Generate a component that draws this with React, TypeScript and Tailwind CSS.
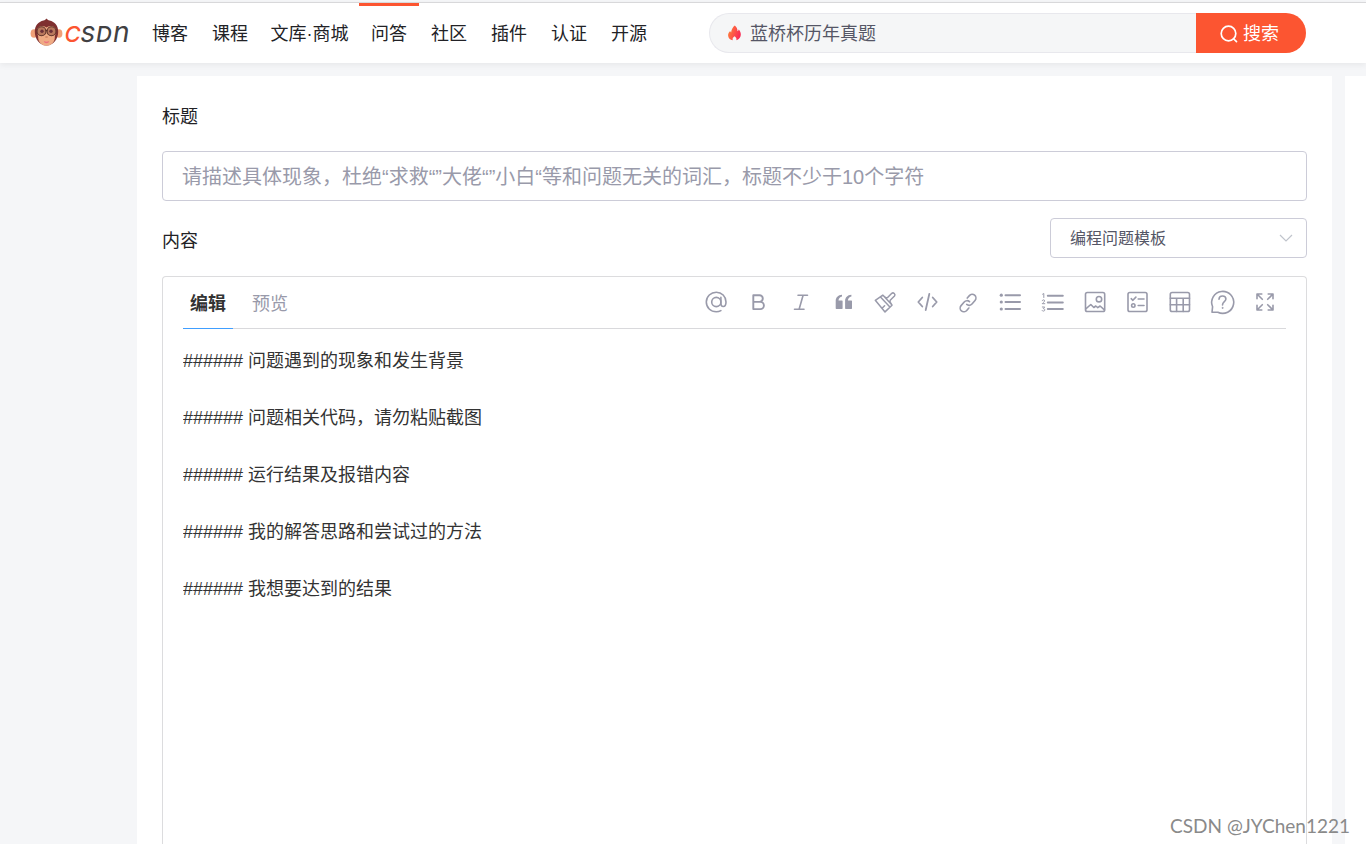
import type { ReactNode } from "react";

const NAV_BEFORE = ["博客", "课程"];
const NAV_AFTER = ["社区", "插件", "认证", "开源"];

const TEMPLATE = [
  "###### 问题遇到的现象和发生背景",
  "###### 问题相关代码，请勿粘贴截图",
  "###### 运行结果及报错内容",
  "###### 我的解答思路和尝试过的方法",
  "###### 我想要达到的结果",
].join("\n");

const TOOLS: { label: string; icon: ReactNode }[] = [
  {
    label: "提及",
    icon: (
      <>
        <circle cx="12.300" cy="12" r="4.600" />
        <path d="M16.900 7.400v6.100c0 1.900 1 3 2.300 3 1.700 0 2.800-1.700 2.800-4.500C22 6.500 17.700 2.200 12.300 2.200S2.300 6.500 2.300 12s4.400 9.800 10 9.800c1.800 0 3.200-.4 4.600-1.200" />
      </>
    ),
  },
  {
    label: "加粗",
    icon: <path strokeWidth="1.9" d="M7.300 5.300h6.200a3.300 3.300 0 0 1 0 6.600H7.300zM7.300 11.900h7a3.600 3.600 0 0 1 0 7.200h-7z" />,
  },
  {
    label: "斜体",
    icon: <path d="M10 5.200h9.500M6.500 19.200H16M15.100 5.200l-4 14" />,
  },
  {
    label: "引用",
    icon: (
      <path
        stroke="none"
        fill="currentColor"
        d="M11 4.800v1.700c-2.200.5-3.300 1.900-3.500 4H11c.4 0 .6.200.6.600v7.200c0 .4-.2.600-.6.600H5.300c-.4 0-.6-.2-.6-.6v-7c0-3.900 2.300-6.200 6.300-6.500zM20.400 4.800v1.700c-2.200.5-3.300 1.900-3.500 4h3.500c.4 0 .6.200.6.600v7.200c0 .4-.2.600-.6.600h-5.700c-.4 0-.6-.2-.6-.6v-7c0-3.900 2.300-6.200 6.300-6.500z"
      />
    ),
  },
  {
    label: "清除格式",
    icon: (
      <path
        strokeWidth="1.500"
        d="M9.800 5.200l3.200 2.700 1.600-.3 4.200-4.300c1.600-1.300 4.100 1 2.700 2.700l-4.300 4.300-.2 1.600 2 3.300-7 6.700L2.300 10.300zM10 5.300l9 9.700M7.700 7.200l9.200 9.800M9.300 18l2.300-2.300"
      />
    ),
  },
  {
    label: "代码",
    icon: <path strokeWidth="1.800" d="M7.300 7.500L3.300 12l4 4.500M17.700 7.500l4 4.500-4 4.500M14.300 4l-3.600 16" />,
  },
  {
    label: "链接",
    icon: (
      <g transform="translate(-.7 1) rotate(-4 12 12)">
        <path d="M10.300 13.300a3.700 3.700 0 0 0 5.300 0l3.300-3.400a3.700 3.700 0 0 0-5.300-5.200l-2.300 2.300" />
        <path d="M13.300 10.700a3.700 3.700 0 0 0-5.300 0l-3.400 3.400a3.700 3.700 0 0 0 5.300 5.200l2.300-2.300" />
      </g>
    ),
  },
  {
    label: "无序列表",
    icon: (
      <g transform="translate(-2 0)">
        <path strokeWidth="2" d="M7.500 5.200H22M7.500 12H22M7.500 19H22" />
        <g fill="currentColor" stroke="none">
          <circle cx="3.300" cy="5.200" r="1.600" />
          <circle cx="3.300" cy="12" r="1.600" />
          <circle cx="3.300" cy="19" r="1.600" />
        </g>
      </g>
    ),
  },
  {
    label: "有序列表",
    icon: (
      <g transform="translate(-1.700 0)">
        <path strokeWidth="2" d="M7.500 5.800H22.500M7.500 12.500H22.500M7.500 19H22.500" />
        <path
          strokeWidth="1"
          d="M2.300 4.200l1.200-.7v4M1.900 10.700c.3-1.400 2.700-1.100 2.400.3-.2.800-1.400 1.500-2.400 2.700h2.600M2 17h2.400L3 18.600c2 0 1.900 2.600.1 2.500-.600 0-1-.2-1.300-.600"
        />
      </g>
    ),
  },
  {
    label: "图片",
    icon: (
      <g transform="translate(-.8 0)">
        <rect x="2.300" y="2.500" width="19.200" height="19" rx="1.800" />
        <circle cx="15.800" cy="9.200" r="2.700" />
        <path d="M2.600 18.800l5-4.300 3 3 2-1.500 2 1.600 2.300-1.600 4.300 3.800" />
      </g>
    ),
  },
  {
    label: "任务列表",
    icon: (
      <g transform="translate(-.5 0)">
        <rect x="2.500" y="2.500" width="19" height="19" rx="1.800" />
        <path d="M5.700 8.700l1.700 1.600 3-3.200M12.700 9h5.800M12.700 15.500h5.800" />
        <circle cx="7.800" cy="15.500" r="1.700" />
      </g>
    ),
  },
  {
    label: "表格",
    icon: (
      <>
        <rect x="2.300" y="2.500" width="19.200" height="19" rx="1.800" />
        <path d="M2.300 8.300h19.200M2.300 14.700h19.200M8.600 8.300v13.200M15.200 8.300v13.200" />
      </>
    ),
  },
  {
    label: "帮助",
    icon: (
      <g transform="translate(-.7 0)">
        <path d="M1.700 22.300l.6-5.600A11 11 0 1 1 7.500 22.200z" />
        <path d="M8.700 9.200c.2-4.300 6.900-4.100 6.900-.1 0 2.500-3.400 2.800-3.400 5.800" />
        <circle cx="12.200" cy="17.900" r=".6" fill="currentColor" strokeWidth=".6" />
      </g>
    ),
  },
  {
    label: "全屏",
    icon: (
      <path d="M4 8.800V4h4.800M4 4l5.300 5.300M15.200 4H20v4.800M20 4l-5.300 5.300M4 15.200V20h4.800M4 20l5.300-5.300M20 15.200V20h-4.800M20 20l-5.300-5.300" />
    ),
  },
];

function Logo() {
  return (
    <svg viewBox="0 0 104 40" className="h-10 w-[104px] overflow-visible" role="img" aria-label="CSDN">
      <g transform="translate(0 4)">
        <ellipse cx="4" cy="16.500" rx="3.400" ry="4.300" fill="#f0a078" />
        <ellipse cx="29" cy="16.500" rx="3.400" ry="4.300" fill="#f0a078" />
        <path d="M16.500 1.500c1 1.200 1.500 1.700 3 2 5.300 1.200 8.700 5.200 8.700 11 0 7.500-4.700 14-11.700 14S4.800 22 4.800 14.500c0-5.800 3.400-9.800 8.700-11 1.500-.3 2-.8 3-2z" fill="#7f3030" />
        <path d="M16.500 10.500c2.300-2.500 9.600-2.700 9.600 4 0 2.500-1.500 3.500-1.300 5.500.3 5-3.800 8.800-8.300 8.800S7.900 25 8.200 20c.2-2-1.300-3-1.300-5.500 0-6.700 7.300-6.500 9.600-4z" fill="#efab84" />
        <circle cx="11.500" cy="14.300" r="4.500" fill="#b9785d" stroke="#5c3129" strokeWidth="1.100" />
        <circle cx="21.500" cy="14.300" r="4.500" fill="#b9785d" stroke="#5c3129" strokeWidth="1.100" />
        <path d="M15.500 13.500h2" stroke="#5c3129" strokeWidth="1.200" />
        <circle cx="12" cy="14.300" r="1.700" fill="#6b3038" />
        <circle cx="21" cy="14.300" r="1.700" fill="#6b3038" />
        <ellipse cx="16.500" cy="20" rx="1.600" ry=".7" fill="#cc805f" />
        <path d="M13.800 24c1.500 1 3.900 1 5.400 0-.5 2.900-4.900 2.900-5.400 0z" fill="#ed7180" />
      </g>
      <g fontFamily="Inter, sans-serif" fontStyle="italic" fontSize="22" fontWeight="500" fill="#414042">
        <text y="29">
          <tspan x="34.500" fill="#fc5531">C</tspan>
          <tspan x="50.500">S</tspan>
          <tspan x="66">D</tspan>
          <tspan x="83" fontSize="28" fontWeight="400">n</tspan>
        </text>
      </g>
    </svg>
  );
}

function Flame() {
  return (
    <svg viewBox="0 0 14 16" className="h-4 w-[14px] shrink-0" aria-hidden="true">
      <defs>
        <linearGradient id="flame" x1="0" y1="0" x2="1" y2=".4">
          <stop offset="0" stopColor="#ff8a35" />
          <stop offset="1" stopColor="#fb2c55" />
        </linearGradient>
      </defs>
      <path
        fill="url(#flame)"
        d="M6.800.5c1.800 1.600 2.700 3.400 2.700 5.700.7-.4 1.100-1 1.300-1.800 1.500 1.800 2.200 3.700 2 5.700-.2 2.600-1.900 4.500-4.500 5.200.3-1 .2-1.900-.5-2.700-.4-.5-.8-.9-1.300-1.300-1.600 1.200-2.300 2.400-1.700 4C2 14.800.2 13 .1 10.500 0 8.500.9 7.300 2.200 6c.1.700.3 1.100.9 1.500C3.500 4.300 4.800 2.200 6.800.5z"
      />
    </svg>
  );
}

function NavLink({ children }: { children: ReactNode }) {
  return (
    <a href="#" className="flex w-[60px] items-center justify-center pt-0.5">
      {children}
    </a>
  );
}

export default function App() {
  return (
    <div className="relative flex h-screen flex-col overflow-hidden bg-[#f5f6f8] font-['Liberation_Sans','Noto_Sans_CJK_SC',sans-serif] text-lg font-normal text-[#222226]">
      <header className="z-10 mt-0.5 flex h-[61px] shrink-0 items-center border-t border-[#d8d8da] bg-white pl-[30px] shadow-[0_2px_6px_rgba(0,0,0,0.06)]">
        <a href="#" className="shrink-0">
          <Logo />
        </a>
        <nav className="ml-1.5 flex shrink-0 self-stretch whitespace-nowrap">
          {NAV_BEFORE.map((item) => (
            <NavLink key={item}>{item}</NavLink>
          ))}
          <a href="#" className="flex w-[99px] items-center justify-center pt-0.5">
            文库·商城
          </a>
          <a href="#" aria-current="page" className="relative flex w-[60px] items-center justify-center pt-0.5">
            <span className="absolute inset-x-0 top-0 h-[3px] bg-[#fc5531]" />
            问答
          </a>
          {NAV_AFTER.map((item) => (
            <NavLink key={item}>{item}</NavLink>
          ))}
        </nav>
        <form className="mr-[60px] ml-[50px] flex h-10 min-w-0 flex-1">
          <label className="flex min-w-0 flex-1 items-center gap-2 rounded-l-full border border-r-0 border-[#e8e8ed] bg-[#f5f6f7] pl-[18px]">
            <Flame />
            <input
              aria-label="搜索内容"
              placeholder="蓝桥杯历年真题"
              className="min-w-0 flex-1 bg-transparent pt-0.5 outline-none placeholder:text-[#555666]"
            />
          </label>
          <button type="button" className="flex w-[110px] items-center justify-center gap-1 rounded-r-full bg-[#fc5531] pt-0.5 pr-1 text-white">
            <svg viewBox="0 0 20 20" className="size-5" fill="none" stroke="currentColor" strokeWidth="1.700" strokeLinecap="round" aria-hidden="true">
              <circle cx="9.500" cy="9.500" r="7.300" />
              <path d="M14.800 15l2.700 2.700" />
            </svg>
            搜索
          </button>
        </form>
      </header>

      <div className="mt-[13px] flex min-h-0 flex-1 gap-[13px] pl-[137px]">
        <main className="flex min-w-0 flex-1 flex-col bg-white px-[25px] pt-[26px]">
          <label htmlFor="title" className="leading-[30px]">
            标题
          </label>
          <input
            id="title"
            placeholder="请描述具体现象，杜绝“求救“”大佬“”小白“等和问题无关的词汇，标题不少于10个字符"
            className="mt-[19px] h-[50px] w-full shrink-0 rounded border border-[#ccccd8] px-[19px] pt-0.5 text-xl outline-none placeholder:text-[#999aaa]"
          />
          <div className="mt-[17px] flex h-10 shrink-0 items-end justify-between">
            <label htmlFor="content" className="leading-[34px]">
              内容
            </label>
            <div className="relative h-10 w-[257px]">
              <select aria-label="模板" className="size-full appearance-none rounded border border-[#ccccd8] bg-white px-[19px] pt-0.5 text-base text-[#555666] outline-none">
                <option>编程问题模板</option>
              </select>
              <svg viewBox="0 0 14 8" className="pointer-events-none absolute top-4 right-[14px] h-2 w-[14px]" fill="none" stroke="#c0c4cc" strokeWidth="1.200" aria-hidden="true">
                <path d="M1 1l6 6 6-6" />
              </svg>
            </div>
          </div>

          <section className="mt-[18px] flex min-h-0 flex-1 flex-col rounded-t border border-b-0 border-[#dcdcde] px-5">
            <div className="flex h-[52px] shrink-0 justify-between border-b border-[#d9d9dc]">
              <div role="tablist" className="-mb-px flex gap-3">
                <button type="button" role="tab" aria-selected="true" className="w-[50px] border-b border-[#409eff] pt-0.5 font-bold text-[#333]">
                  编辑
                </button>
                <button type="button" role="tab" aria-selected="false" className="w-[50px] border-b border-transparent pt-0.5 text-[#999aaa]">
                  预览
                </button>
              </div>
              <div className="flex w-[591px] justify-between pb-0.5 text-[#999aaa]">
                {TOOLS.map(({ label, icon }) => (
                  <button key={label} type="button" aria-label={label} className="flex w-[42px] items-center justify-center">
                    <svg viewBox="0 0 24 24" className="size-6 overflow-visible" fill="none" stroke="currentColor" strokeWidth="1.600" strokeLinecap="round" strokeLinejoin="round" aria-hidden="true">
                      {icon}
                    </svg>
                  </button>
                ))}
              </div>
            </div>
            <textarea
              id="content"
              defaultValue={TEMPLATE}
              spellCheck={false}
              className="mt-1 w-full flex-1 resize-none overflow-hidden leading-[57px] text-[#333] outline-none"
            />
          </section>
        </main>
        <aside className="w-[21px] shrink-0 bg-white" />
      </div>

      <p className="pointer-events-none absolute right-4 bottom-1.5 font-['Lato',sans-serif] text-[19px] leading-6 text-[#8a8a8a]">
        CSDN @JYChen1221
      </p>
    </div>
  );
}
